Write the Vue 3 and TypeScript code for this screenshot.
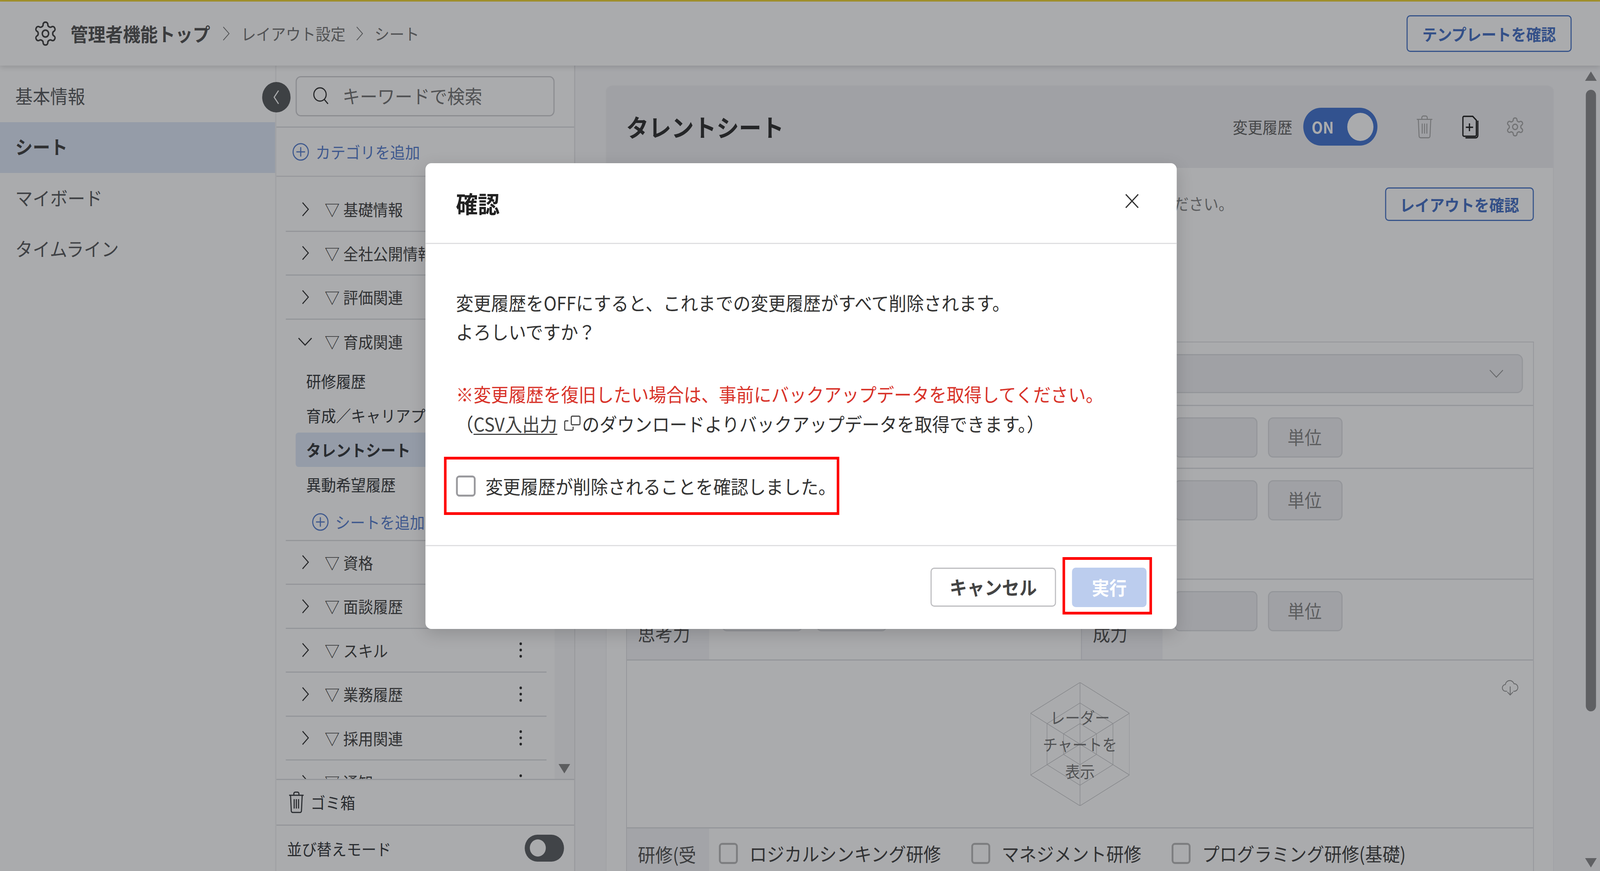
<script setup lang="ts">
interface Row { name: string; open?: boolean; kebab?: boolean }
const fit = `transform: scaleX(${Math.min(1, window.innerWidth / 4400)})`
const nav = [
  { label: '基本情報', active: false },
  { label: 'シート', active: true },
  { label: 'マイボード', active: false },
  { label: 'タイムライン', active: false },
]
const before: Row[] = [{ name: '基礎情報' }, { name: '全社公開情報' }, { name: '評価関連' }]
const subs = [
  { name: '研修履歴', active: false },
  { name: '育成／キャリアプラン', active: false },
  { name: 'タレントシート', active: true },
  { name: '異動希望履歴', active: false },
]
const after: Row[] = [
  { name: '資格' },
  { name: '面談履歴' },
  { name: 'スキル', kebab: true },
  { name: '業務履歴', kebab: true },
  { name: '採用関連', kebab: true },
  { name: '通知', kebab: true },
]
const courses = ['ロジカルシンキング研修', 'マネジメント研修', 'プログラミング研修(基礎)']
const gear = 'M12.22 2h-.44a2 2 0 0 0-2 2v.18a2 2 0 0 1-1 1.73l-.43.25a2 2 0 0 1-2 0l-.15-.08a2 2 0 0 0-2.73.73l-.22.38a2 2 0 0 0 .73 2.73l.15.1a2 2 0 0 1 1 1.72v.51a2 2 0 0 1-1 1.74l-.15.09a2 2 0 0 0-.73 2.73l.22.38a2 2 0 0 0 2.73.73l.15-.08a2 2 0 0 1 2 0l.43.25a2 2 0 0 1 1 1.73V20a2 2 0 0 0 2 2h.44a2 2 0 0 0 2-2v-.18a2 2 0 0 1 1-1.73l.43-.25a2 2 0 0 1 2 0l.15.08a2 2 0 0 0 2.73-.73l.22-.39a2 2 0 0 0-.73-2.73l-.15-.08a2 2 0 0 1-1-1.74v-.5a2 2 0 0 1 1-1.74l.15-.09a2 2 0 0 0 .73-2.73l-.22-.38a2 2 0 0 0-2.73-.73l-.15.08a2 2 0 0 1-2 0l-.43-.25a2 2 0 0 1-1-1.73V4a2 2 0 0 0-2-2z'
const cx = 136
const cy = 158
const rings = [1, 2 / 3, 1 / 3]
const verts = [[0, -158], [136, -79], [136, 79], [0, 158], [-136, 79], [-136, -79]]
const ringPts = rings.map((r) => verts.map(([x, y]) => `${cx + x * r},${cy + y * r}`).join(' '))
</script>

<template>
  <div class="root" :style="fit">
    <div class="gold"></div>
    <header class="topbar">
      <svg class="top-gear" viewBox="0 0 24 24"><path :d="gear" /><circle cx="12" cy="12" r="3" /></svg>
      <span class="crumb-main">管理者機能トップ</span>
      <svg class="crumb-sep" viewBox="0 0 22 36"><path d="M3 1l16 17L3 35" /></svg>
      <span class="crumb">レイアウト設定</span>
      <svg class="crumb-sep" viewBox="0 0 22 36"><path d="M3 1l16 17L3 35" /></svg>
      <span class="crumb">シート</span>
      <button class="outline-btn tpl">テンプレートを確認</button>
    </header>

    <div class="content">
      <nav class="nav">
        <div v-for="n in nav" :key="n.label" class="nav-item" :class="{ on: n.active }">{{ n.label }}</div>
      </nav>

      <aside class="tree">
        <div class="collapse">
          <svg viewBox="0 0 24 40"><path d="M18 3L6 20l12 17" /></svg>
        </div>
        <div class="search-wrap">
          <div class="search">
            <svg viewBox="0 0 44 46"><circle cx="20" cy="20" r="17" /><path d="M32 33l10 11" /></svg>
            <span>キーワードで検索</span>
          </div>
        </div>
        <div class="add-cat">
          <svg class="plus" viewBox="0 0 48 48"><circle cx="24" cy="24" r="21" /><path d="M24 12v24M12 24h24" /></svg>
          <span>カテゴリを追加</span>
        </div>
        <div class="list-wrap">
          <div class="list">
            <div v-for="r in before" :key="r.name" class="row">
              <svg class="chev" viewBox="0 0 24 36"><path d="M4 1l16 17L4 35" /></svg>
              <span class="row-name"><em>▽</em>{{ r.name }}</span>
            </div>
            <div class="row open">
              <svg class="chev-down" viewBox="0 0 40 24"><path d="M2 3l18 18L38 3" /></svg>
              <span class="row-name"><em>▽</em>育成関連</span>
            </div>
            <div v-for="s in subs" :key="s.name" class="sub" :class="{ on: s.active }">{{ s.name }}</div>
            <div class="add-sheet">
              <svg class="plus" viewBox="0 0 48 48"><circle cx="24" cy="24" r="21" /><path d="M24 12v24M12 24h24" /></svg>
              <span>シートを追加</span>
            </div>
            <div v-for="r in after" :key="r.name" class="row">
              <svg class="chev" viewBox="0 0 24 36"><path d="M4 1l16 17L4 35" /></svg>
              <span class="row-name"><em>▽</em>{{ r.name }}</span>
              <svg v-if="r.kebab" class="kebab" viewBox="0 0 8 40"><circle cx="4" cy="4" r="3.4" /><circle cx="4" cy="20" r="3.4" /><circle cx="4" cy="36" r="3.4" /></svg>
            </div>
          </div>
          <div class="list-scroll"><i></i></div>
        </div>
        <div class="trash-row">
          <svg class="trash-ic" viewBox="0 0 44 56"><path d="M2 10h40M15 10V6a4 4 0 0 1 4-4h6a4 4 0 0 1 4 4v4M6 10l2 40a4 4 0 0 0 4 4h20a4 4 0 0 0 4-4l2-40M16 20v24M22 20v24M28 20v24" /></svg>
          <span>ゴミ箱</span>
        </div>
        <div class="sort-row">
          <span>並び替えモード</span>
          <div class="mini-toggle"><i></i></div>
        </div>
      </aside>

      <main class="main">
        <section class="card">
          <div class="card-head">
            <h1>タレントシート</h1>
            <span class="hist">変更履歴</span>
            <div class="toggle"><span>ON</span><i></i></div>
            <svg class="ic-trash" viewBox="0 0 44 56"><path d="M2 10h40M15 10V6a4 4 0 0 1 4-4h6a4 4 0 0 1 4 4v4M6 10l2 40a4 4 0 0 0 4 4h20a4 4 0 0 0 4-4l2-40M16 20v24M22 20v24M28 20v24" /></svg>
            <svg class="ic-copy" viewBox="0 0 50 60"><path d="M8 3h24l10 10v38a3 3 0 0 1-3 3H8a3 3 0 0 1-3-3V6a3 3 0 0 1 3-3z" /><path d="M46 14v38a6 6 0 0 1-6 6H12" /><path d="M23 21v20M13 31h20" /></svg>
            <svg class="ic-gear" viewBox="0 0 24 24"><path :d="gear" /><circle cx="12" cy="12" r="3" /></svg>
          </div>
          <div class="card-body">
            <div class="desc">
              <span>ください。</span>
              <button class="outline-btn lay">レイアウトを確認</button>
            </div>
            <div class="table">
              <div class="t-row r1">
                <div class="label"></div>
                <div class="select">
                  <svg viewBox="0 0 40 24"><path d="M2 3l18 18L38 3" /></svg>
                </div>
              </div>
              <div class="t-row r2">
                <div class="label"></div>
                <div class="half"></div>
                <div class="label mid"></div>
                <div class="half fields">
                  <div class="input"></div>
                  <div class="unit">単位</div>
                </div>
              </div>
              <div class="t-row r3">
                <div class="label"></div>
                <div class="half"></div>
                <div class="label mid"></div>
                <div class="half fields">
                  <div class="input"></div>
                  <div class="unit">単位</div>
                </div>
              </div>
              <div class="t-row r4">
                <div class="label">思考力</div>
                <div class="half left-fields">
                  <div class="box a"></div>
                  <div class="box b"></div>
                </div>
                <div class="label mid">成力</div>
                <div class="half fields">
                  <div class="input"></div>
                  <div class="unit">単位</div>
                </div>
              </div>
              <div class="t-row chart">
                <div class="radar">
                  <svg viewBox="0 0 272 316">
                    <polygon v-for="(p, i) in ringPts" :key="i" :points="p" />
                    <line v-for="(v, i) in verts" :key="'s' + i" :x1="cx" :y1="cy" :x2="cx + v[0]" :y2="cy + v[1]" />
                  </svg>
                  <div class="radar-text">レーダー<br />チャートを<br />表示</div>
                </div>
                <svg class="cloud" viewBox="0 0 48 46"><path d="M15 33H11a9 9 0 0 1-1-18 13 13 0 0 1 25-2 10 10 0 0 1 2 20h-4" /><path d="M24 20v23M16 35l8 8 8-8" /></svg>
              </div>
              <div class="t-row train">
                <div class="label">研修(受</div>
                <div class="courses">
                  <label v-for="c in courses" :key="c" class="course"><i></i><span>{{ c }}</span></label>
                </div>
              </div>
            </div>
          </div>
        </section>
        <div class="page-scroll">
          <i class="up"></i>
          <b></b>
          <i class="down"></i>
        </div>
      </main>
    </div>

    <div class="overlay">
      <div class="modal">
        <div class="m-head">
          <h2>確認</h2>
          <svg viewBox="0 0 40 40"><path d="M2 2l36 36M38 2L2 38" /></svg>
        </div>
        <div class="m-body">
          <p class="msg">変更履歴をOFFにすると、これまでの変更履歴がすべて削除されます。<br />よろしいですか？</p>
          <p class="warn">※変更履歴を復旧したい場合は、事前にバックアップデータを取得してください。</p>
          <p class="note">（<a>CSV入出力</a><svg class="ext" viewBox="0 0 46 40"><path d="M12 14H5a3 3 0 0 0-3 3v18a3 3 0 0 0 3 3h17a3 3 0 0 0 3-3v-6" /><rect x="20" y="2" width="24" height="22" rx="3" /></svg>のダウンロードよりバックアップデータを取得できます。）</p>
          <div class="check-mark">
            <i></i>
            <span>変更履歴が削除されることを確認しました。</span>
          </div>
        </div>
        <div class="m-foot">
          <button class="cancel">キャンセル</button>
          <div class="run-mark"><button class="run">実行</button></div>
        </div>
      </div>
    </div>
  </div>
</template>

<style>
html, body { margin: 0; background: #fff; overflow: hidden; }
</style>

<style scoped>
.root {
  position: relative;
  width: 4400px;
  height: 2231px;
  overflow: hidden;
  transform-origin: 0 0;
  display: flex;
  flex-direction: column;
  background: #fff;
  color: #3f4246;
  font-family: "Noto Sans CJK JP", "Noto Sans", sans-serif;
  font-size: 41px;
  line-height: 1.4;
}
svg { fill: none; stroke: currentColor; display: block; flex: none; }
button { font-family: inherit; cursor: default; }
.gold { height: 4px; flex: none; background: #f5d93a; }
.topbar {
  height: 164px;
  flex: none;
  display: flex;
  align-items: center;
  background: #fff;
  box-shadow: 0 4px 14px rgba(0, 0, 0, .14);
  padding: 0 78px 0 90px;
  position: relative;
  z-index: 2;
}
.top-gear { width: 70px; height: 70px; stroke-width: 1.4; color: #444; margin-right: 34px; }
.crumb-main { font-size: 48px; font-weight: 700; color: #555; margin-right: 5px; }
.crumb-sep { width: 22px; height: 36px; margin: 0 30px 0 28px; stroke-width: 2; color: #777; }
.crumb { color: #777; font-size: 41px; }
.outline-btn {
  background: #fff;
  border: 3px solid #4f7ac9;
  border-radius: 10px;
  color: #4a74c6;
  font-size: 41px;
  font-weight: 700;
  line-height: 1;
  padding: 0;
}
.tpl { width: 454px; height: 94px; margin-left: auto; }
.content { flex: 1; min-height: 0; display: flex; }
.nav { width: 757px; flex: none; padding-top: 14px; box-sizing: border-box; background: #fff; }
.nav-item {
  height: 130.5px;
  display: flex;
  align-items: center;
  padding: 0 0 6px 42px;
  box-sizing: border-box;
  font-size: 48px;
  color: #5b5d60;
}
.nav-item.on { background: #dfe8f8; font-weight: 700; color: #444; }
.tree {
  width: 825px;
  flex: none;
  position: relative;
  display: flex;
  flex-direction: column;
  border-left: 3px solid #f0f0f2;
  border-right: 3px solid #e4e4e6;
  box-sizing: border-box;
  background: #fff;
}
.collapse {
  position: absolute;
  left: -39px;
  top: 42px;
  width: 78px;
  height: 78px;
  border-radius: 50%;
  background: #5a5c5f;
  color: #fff;
  display: flex;
  align-items: center;
  justify-content: center;
  z-index: 1;
}
.collapse svg { width: 24px; height: 40px; stroke-width: 3; }
.search-wrap { height: 159px; flex: none; padding: 27px 54px 0 53px; box-sizing: border-box; border-bottom: 3px solid #dedfe2; }
.search {
  height: 103px;
  box-sizing: border-box;
  border: 3px solid #cfd0d3;
  border-radius: 14px;
  display: flex;
  align-items: center;
  padding: 0 0 4px 44px;
  font-size: 48px;
  color: #777;
}
.search svg { width: 44px; height: 46px; stroke-width: 3; color: #333; margin-right: 38px; }
.add-cat { height: 126px; flex: none; display: flex; align-items: center; padding-left: 43px; color: #5b82cf; border-bottom: 3px solid #e4e4e6; box-sizing: border-box; }
.plus { width: 48px; height: 48px; stroke-width: 3; margin-right: 17px; }
.list-wrap { height: 1542px; flex: none; display: flex; overflow: hidden; }
.list { flex: none; width: 743px; padding: 28px 0 0 26px; box-sizing: border-box; }
.row {
  height: 112.5px;
  box-sizing: border-box;
  display: flex;
  align-items: center;
  border-bottom: 3px solid #dedfe2;
  color: #3a3c40;
  padding-left: 42px;
  position: relative;
}
.row.open { border-bottom: 0; }
.chev { width: 24px; height: 36px; stroke-width: 2.6; margin-right: 41px; color: #333; }
.chev-down { width: 40px; height: 24px; stroke-width: 3; margin: 0 34px 0 -9px; color: #333; }
.row-name { white-space: nowrap; color: #444; }
.row-name em { font-style: normal; margin-right: 10px; }
.kebab { width: 8px; height: 40px; fill: #333; stroke: none; margin-left: auto; margin-right: 67px; }
.sub { height: 88.5px; display: flex; align-items: center; padding-left: 29px; margin-left: 27px; color: #3a3c40; white-space: nowrap; border-radius: 8px; }
.sub.on { background: #dfe8f8; font-weight: 700; height: 88px; }
.add-sheet { height: 101px; box-sizing: border-box; display: flex; align-items: center; padding: 6px 0 0 71px; color: #5b82cf; border-bottom: 3px solid #dedfe2; }
.list-scroll { flex: none; width: 53px; margin-left: 22px; background: #f8f8f9; display: flex; justify-content: center; align-items: flex-end; padding-bottom: 14px; box-sizing: border-box; }
.list-scroll i { width: 0; height: 0; border-left: 16px solid transparent; border-right: 16px solid transparent; border-top: 24px solid #888; }
.trash-row { height: 120px; flex: none; box-sizing: border-box; display: flex; align-items: center; padding-left: 33px; border-top: 3px solid #dedfe2; border-bottom: 3px solid #dedfe2; color: #3a3c40; }
.trash-ic { width: 44px; height: 56px; stroke-width: 3; margin-right: 17px; }
.sort-row { flex: 1; display: flex; align-items: center; padding: 2px 0 0 29px; color: #3a3c40; }
.mini-toggle { width: 108px; height: 69px; border-radius: 35px; background: #5f6165; margin-left: auto; margin-right: 28px; margin-top: -4px; display: flex; align-items: center; padding-left: 14px; box-sizing: border-box; }
.mini-toggle i { width: 44px; height: 44px; border-radius: 50%; background: #fff; }
.main { flex: 1; min-width: 0; display: flex; background: #f9f9fb; padding-left: 84px; position: relative; }
.card { width: 2607px; margin-top: 51px; flex: none; background: #fff; border-radius: 16px 16px 0 0; box-sizing: border-box; border-left: 2px solid #f0f0f2; border-right: 2px solid #f0f0f2; }
.card-head { height: 211px; background: #f0f0f3; border-radius: 16px 16px 0 0; display: flex; align-items: center; padding: 0 77px 0 54px; }
.card-head h1 { margin: 0; font-size: 62px; font-weight: 700; color: #333; margin-right: auto; }
.hist { color: #666; margin-right: 30px; font-size: 41px; }
.toggle { width: 204px; height: 97px; border-radius: 49px; background: #4877d1; display: flex; align-items: center; justify-content: space-between; padding: 0 11px 0 23px; box-sizing: border-box; color: #fff; font-weight: 700; font-size: 40px; margin-right: 101px; }
.toggle i { width: 72px; height: 72px; border-radius: 50%; background: #fff; }
.ic-trash { width: 57px; height: 60px; stroke-width: 2.4; color: #aaa; margin-right: 72px; }
.ic-copy { width: 50px; height: 60px; stroke-width: 3.4; color: #222; margin-right: 71px; }
.ic-gear { width: 55px; height: 56px; stroke-width: 1.4; color: #aaa; }
.card-body { padding: 0 53px 0 54px; }
.desc { height: 445px; box-sizing: border-box; padding-top: 50px; display: flex; justify-content: flex-end; align-items: flex-start; }
.desc span { color: #888; margin-right: 417px; line-height: 80px; }
.lay { width: 409px; height: 86px; }
.table { border: 2px solid #dedfe2; border-bottom: 0; }
.t-row { display: flex; border-bottom: 3px solid #dedfe2; box-sizing: border-box; }
.r1 { height: 163px; }
.r2 { height: 161px; }
.r3 { height: 284px; }
.r4 { height: 207px; }
.chart { height: 430px; position: relative; justify-content: center; align-items: center; }
.train { height: 200px; }
.label {
  width: 226px;
  flex: none;
  background: #f4f4f7;
  padding: 0 0 0 30px;
  box-sizing: border-box;
  display: block;
  font-size: 48px;
  line-height: 75px;
  white-space: nowrap;
  color: #555;
}
.r4 .label { padding-top: 99px; }
.train .label { padding-top: 28px; }
.label.mid { width: 224px; border-left: 2px solid #dedfe2; }
.r1 .select { flex: 1; margin: 30px 28px 0 32px; height: 100px; box-sizing: border-box; background: #f0f0f3; border: 3px solid #dedfe2; border-radius: 16px; display: flex; align-items: center; justify-content: flex-end; padding-right: 50px; color: #999; }
.select svg { width: 40px; height: 24px; stroke-width: 2.4; }
.half { width: 1023px; flex: none; }
.fields { display: flex; gap: 29px; padding: 29px 0 0 33px; box-sizing: border-box; width: auto; flex: 1; }
.input { width: 228px; height: 103px; box-sizing: border-box; background: #f0f0f3; border: 3px solid #dedfe2; border-radius: 14px; }
.unit { width: 205px; height: 103px; box-sizing: border-box; background: #f0f0f3; border: 3px solid #dedfe2; border-radius: 14px; display: flex; align-items: center; justify-content: center; font-size: 47px; color: #888; padding: 0 4px 6px 0; }
.left-fields { display: flex; gap: 38px; padding: 29px 0 0 35px; box-sizing: border-box; }
.box { height: 103px; box-sizing: border-box; background: #f0f0f3; border: 3px solid #dedfe2; border-radius: 14px; }
.box.a { width: 222px; }
.box.b { width: 194px; }
.radar { display: grid; place-items: center; width: 272px; height: 316px; }
.radar > * { grid-area: 1 / 1; }
.radar svg { width: 272px; height: 316px; stroke: #c9cacc; stroke-width: 1.5; }
.radar-text { text-align: center; line-height: 69px; font-size: 41px; color: #777; white-space: nowrap; }
.cloud { position: absolute; right: 40px; top: 46px; width: 46px; height: 46px; stroke-width: 2.4; color: #999; }
.courses { display: flex; align-items: flex-start; padding: 37px 0 0 27px; font-size: 48px; }
.course { display: flex; align-items: center; height: 54px; color: #444; white-space: nowrap; margin-right: 83px; }
.course i { width: 52px; height: 54px; box-sizing: border-box; border: 5px solid #bbb; border-radius: 9px; background: #fff; margin-right: 32px; }
.page-scroll { position: absolute; right: 0; top: 0; bottom: 0; width: 50px; display: flex; flex-direction: column; align-items: center; padding-top: 15px; box-sizing: border-box; }
.page-scroll .up { width: 0; height: 0; border-left: 16px solid transparent; border-right: 16px solid transparent; border-bottom: 24px solid #8c8c8e; }
.page-scroll b { display: block; width: 28px; height: 1592px; border-radius: 14px; background: #8c8c8e; margin-top: 23px; }
.page-scroll .down { width: 0; height: 0; border-left: 16px solid transparent; border-right: 16px solid transparent; border-top: 24px solid #8c8c8e; margin-top: 376px; }
.overlay {
  position: absolute;
  inset: 0;
  background: rgba(12, 14, 20, .35);
  z-index: 5;
  padding: 418px 0 0 1170px;
  box-sizing: border-box;
}
.modal {
  width: 2066px;
  height: 1193px;
  background: #fff;
  border-radius: 16px;
  color: #333;
  font-size: 48.2px;
  display: flex;
  flex-direction: column;
  box-shadow: 0 12px 44px rgba(0, 0, 0, .16);
}
.m-head { height: 207px; flex: none; box-sizing: border-box; border-bottom: 3px solid #dfdfe1; display: flex; align-items: flex-start; justify-content: space-between; padding: 70px 104px 0 84px; }
.m-head h2 { margin: 0; font-size: 60px; line-height: 64px; font-weight: 700; color: #222; }
.m-head svg { width: 38px; height: 38px; stroke-width: 3.4; color: #333; margin-top: 8px; }
.m-body { flex: 1; padding: 112px 0 0 84px; }
.msg { margin: 0; line-height: 74px; }
.warn { margin: 85px 0 0; line-height: 76px; color: #d8332a; }
.note { margin: 0; line-height: 76px; display: flex; align-items: center; white-space: nowrap; }
.note a { text-decoration: underline; text-underline-offset: 6px; text-decoration-thickness: 3px; color: #444; }
.ext { width: 46px; height: 40px; stroke-width: 3; color: #444; margin: 0 4px 0 18px; }
.check-mark { margin: 48px 0 0 -33px; width: 1087px; height: 149px; box-sizing: border-box; border: 7px solid #f00; display: flex; align-items: center; padding-left: 26px; }
.check-mark i { width: 54px; height: 54px; box-sizing: border-box; border: 5px solid #9a9a9e; border-radius: 9px; margin-right: 27px; flex: none; }
.check-mark span { white-space: nowrap; }
.m-foot { height: 215px; flex: none; box-sizing: border-box; border-top: 3px solid #dfdfe1; display: flex; justify-content: flex-end; align-items: flex-start; padding: 28px 68px 0 0; }
.cancel { width: 345px; height: 100px; margin: 27px 18px 0 0; background: #fff; border: 3px solid #bdbdc0; border-radius: 10px; font-size: 48px; font-weight: 700; color: #444; padding: 0 0 4px; line-height: 1; }
.run-mark { width: 246px; height: 147px; box-sizing: border-box; border: 7px solid #f00; padding: 20px 8px 0 19px; }
.run { width: 205px; height: 101px; background: #bccdee; border: 0; border-radius: 10px; color: #fff; font-size: 48px; font-weight: 700; padding: 0 0 4px; line-height: 1; }
</style>
